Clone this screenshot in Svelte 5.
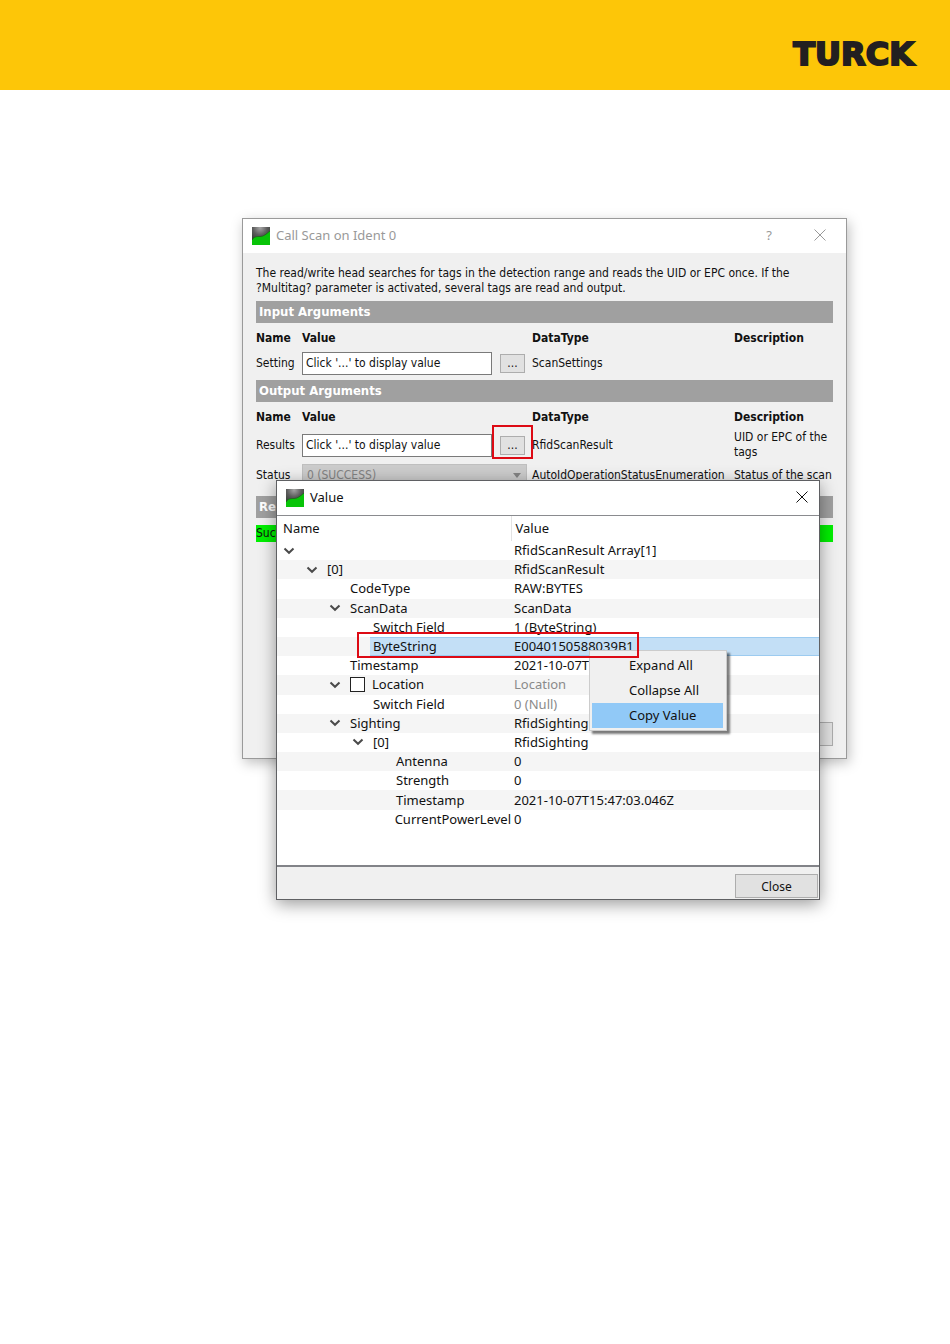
<script lang="ts">
    const treeRows = [
        { level: 0, name: '', value: 'RfidScanResult Array[1]', open: true },
        { level: 1, name: '[0]', value: 'RfidScanResult', open: true },
        { level: 2, name: 'CodeType', value: 'RAW:BYTES' },
        { level: 2, name: 'ScanData', value: 'ScanData', open: true },
        { level: 3, name: 'Switch Field', value: '1 (ByteString)' },
        { level: 3, name: 'ByteString', value: 'E0040150588039B1', selected: true },
        { level: 2, name: 'Timestamp', value: '2021-10-07T15:47:03.046Z' },
        { level: 2, name: 'Location', value: 'Location', open: true, checkbox: true, muted: true },
        { level: 3, name: 'Switch Field', value: '0 (Null)', muted: true },
        { level: 2, name: 'Sighting', value: 'RfidSighting Array[1]', open: true },
        { level: 3, name: '[0]', value: 'RfidSighting', open: true },
        { level: 4, name: 'Antenna', value: '0' },
        { level: 4, name: 'Strength', value: '0' },
        { level: 4, name: 'Timestamp', value: '2021-10-07T15:47:03.046Z' },
        { level: 4, name: 'CurrentPowerLevel', value: '0' }
    ];

    const menuItems = ['Expand All', 'Collapse All', 'Copy Value'];
</script>

{#snippet appIcon(id)}
    <svg class="app-icon" viewBox="0 0 18 18" aria-hidden="true">
        <defs>
            <radialGradient id={id} cx="0.45" cy="0.05" r="0.8">
                <stop offset="0" stop-color="#a5a5a5" />
                <stop offset="0.5" stop-color="#5c5c5c" />
                <stop offset="1" stop-color="#2f3a2f" />
            </radialGradient>
        </defs>
        <rect width="18" height="18" fill="url(#{id})" />
        <path d="M0 13 C2 9.500 5 9.500 8 9.500 C12 9.500 14 7 18 4 V18 H0 Z" fill="#08c408" />
        <path d="M0 13 C2 9.500 5 9.500 8 9.500 C12 9.500 14 7 18 4" fill="none" stroke="#1c5c1c" stroke-width="0.7" />
    </svg>
{/snippet}

{#snippet closeIcon()}
    <svg class="close-icon" viewBox="0 0 12 12" aria-hidden="true">
        <path d="M0.500 0.500 L11.500 11.500 M11.500 0.500 L0.500 11.500" />
    </svg>
{/snippet}

{#snippet columns()}
    <colgroup>
        <col class="col-name" />
        <col class="col-value" />
        <col class="col-more" />
        <col class="col-type" />
        <col />
    </colgroup>
    <thead>
        <tr>
            <th>Name</th>
            <th>Value</th>
            <th></th>
            <th>DataType</th>
            <th>Description</th>
        </tr>
    </thead>
{/snippet}

<header class="brand-bar">
    <div class="brand">TURCK</div>
</header>

<main>
    <div class="desktop">
        <section class="dialog">
            <div class="title-bar">
                {@render appIcon('icon-call')}
                <h1>Call Scan on Ident 0</h1>
                <button class="title-button help" aria-label="Help">?</button>
                <button class="title-button" aria-label="Close dialog">{@render closeIcon()}</button>
            </div>
            <div class="dialog-body">
                <p>
                    The read/write head searches for tags in the detection range and reads the UID or EPC once. If the
                    <span class="keep">?Multitag?</span> parameter is activated, several tags are read and output.
                </p>

                <h2>Input Arguments</h2>
                <table class="arguments">
                    {@render columns()}
                    <tbody>
                        <tr class="input-row">
                            <td><label for="setting">Setting</label></td>
                            <td><input id="setting" type="text" readonly value="Click '...' to display value" /></td>
                            <td><button class="more" aria-label="Show setting">...</button></td>
                            <td>ScanSettings</td>
                            <td></td>
                        </tr>
                    </tbody>
                </table>

                <h2>Output Arguments</h2>
                <table class="arguments">
                    {@render columns()}
                    <tbody>
                        <tr class="result-row">
                            <td><label for="results">Results</label></td>
                            <td><input id="results" type="text" readonly value="Click '...' to display value" /></td>
                            <td class="marked">
                                <button class="more" aria-label="Show results">...</button>
                                <span class="mark mark-button"></span>
                            </td>
                            <td>RfidScanResult</td>
                            <td>UID or EPC of the tags</td>
                        </tr>
                        <tr class="status-row">
                            <td><label for="status">Status</label></td>
                            <td colspan="2">
                                <div class="select-box">
                                    <select id="status" disabled>
                                        <option>0 (SUCCESS)</option>
                                    </select>
                                    <svg viewBox="0 0 8 5" aria-hidden="true"><path d="M0 0 H8 L4 5 Z" /></svg>
                                </div>
                            </td>
                            <td>AutoIdOperationStatusEnumeration</td>
                            <td>Status of the scan</td>
                        </tr>
                    </tbody>
                </table>

                <h2>Result</h2>
                <div class="success">Success</div>

                <div class="dialog-footer">
                    <button class="push">Close</button>
                </div>
            </div>
        </section>

        <section class="value-window">
            <div class="title-bar">
                {@render appIcon('icon-value')}
                <h1>Value</h1>
                <button class="title-button" aria-label="Close window">{@render closeIcon()}</button>
            </div>
            <div class="tree-area">
                <table class="tree">
                    <thead>
                        <tr>
                            <th>Name</th>
                            <th>Value</th>
                        </tr>
                    </thead>
                    <tbody>
                        {#each treeRows as row, i}
                            <tr class:selected={row.selected}>
                                <td>
                                    <div class="node" style="padding-left: {row.level * 23 + 6}px">
                                        <span class="toggle">
                                            {#if row.open}
                                                <svg viewBox="0 0 12 8" aria-hidden="true"><path d="M1.500 1.500 L6 5.800 L10.500 1.500" /></svg>
                                            {/if}
                                        </span>
                                        {#if row.checkbox}
                                            <input id="node-{i}" type="checkbox" />
                                            <label for="node-{i}">{row.name}</label>
                                        {:else}
                                            <span class="node-name">{row.name}</span>
                                        {/if}
                                    </div>
                                </td>
                                <td class:muted={row.muted}>{row.value}</td>
                            </tr>
                        {/each}
                    </tbody>
                </table>

                <div class="context-menu" role="menu">
                    {#each menuItems as item}
                        <button role="menuitem" class:active={item === 'Copy Value'}>{item}</button>
                    {/each}
                </div>
                <span class="mark mark-row"></span>
            </div>
            <div class="window-footer">
                <button class="push">Close</button>
            </div>
        </section>
    </div>
</main>

<style>
:global(body) {
    margin: 0;
    background: #fff;
}
* {
    box-sizing: border-box;
}
button, input, select {
    margin: 0;
    font: inherit;
    color: inherit;
}
h1, h2, p {
    margin: 0;
    font: inherit;
}
table {
    border-collapse: collapse;
    table-layout: fixed;
    width: 100%;
}
td, th {
    padding: 0;
    text-align: left;
}

.brand-bar {
    display: flex;
    justify-content: flex-end;
    align-items: center;
    height: 90px;
    padding: 18px 36px 0 0;
    background: #fdc608;
}
.brand {
    font: bold 32px/32px "DejaVu Sans", sans-serif;
    color: #231f20;
    -webkit-text-stroke: 2px #231f20;
}

main {
    min-height: calc(100vh - 90px);
    padding: 128px 103px 240px 242px;
}
.desktop {
    position: relative;
    color: #111;
    font: 13px/19px "Noto Sans", sans-serif;
}
.dialog {
    display: flex;
    flex-direction: column;
    min-height: 541px;
    border: 1px solid #9a9a9a;
    background: #f0f0f0;
    box-shadow: 2px 4px 12px rgba(0, 0, 0, 0.25);
}
.title-bar {
    display: flex;
    align-items: center;
    height: 34px;
    padding-left: 9px;
    background: #fff;
}
.title-bar h1 {
    flex: 1;
    padding: 0 0 2px 6px;
}
.app-icon {
    width: 18px;
    height: 18px;
}
.title-button {
    display: flex;
    align-items: center;
    justify-content: center;
    width: 34px;
    height: 34px;
    padding: 0 0 2px;
    border: 0;
    background: none;
}
.close-icon {
    width: 12px;
    height: 12px;
    fill: none;
    stroke: currentColor;
}
.dialog .title-bar {
    padding-right: 9px;
    color: #999;
}
.dialog .help {
    margin-right: 17px;
}

.dialog-body {
    flex: 1;
    display: flex;
    flex-direction: column;
    padding: 13px 13px 12px;
    font: 12px/15px "DejaVu Sans Condensed", "DejaVu Sans", sans-serif;
    font-stretch: condensed;
}
.keep {
    white-space: nowrap;
}
h2 {
    margin-top: 5px;
    padding: 0 3px;
    background: #a0a0a0;
    color: #fff;
    font-size: 13px;
    font-weight: bold;
    line-height: 22px;
}
.arguments th {
    height: 28px;
    padding-top: 2px;
}
.col-name {
    width: 46px;
}
.col-value {
    width: 198px;
}
.col-more {
    width: 32px;
}
.col-type {
    width: 202px;
}
.arguments input {
    display: block;
    width: 190px;
    height: 23px;
    padding: 0 3px;
    border: 1px solid #7a7a7a;
    outline: 0;
    background: #fff;
}
.input-row {
    height: 24px;
}
.result-row {
    height: 30px;
}
.status-row {
    height: 31px;
}
.more {
    display: block;
    width: 25px;
    height: 19px;
    padding: 0;
    border: 1px solid #adadad;
    background: #e1e1e1;
    line-height: 15px;
}
.marked {
    position: relative;
}
.mark {
    position: absolute;
    border: 2px solid #dd0a14;
    pointer-events: none;
}
.mark-button {
    top: -5px;
    left: -8px;
    width: 41px;
    height: 34px;
}
.select-box {
    position: relative;
    width: 225px;
}
.select-box select {
    display: block;
    appearance: none;
    width: 100%;
    height: 23px;
    padding: 0 4px;
    border: 1px solid #bfbfbf;
    border-radius: 0;
    background: #ccc;
    color: #838383;
    opacity: 1;
}
.select-box svg {
    position: absolute;
    top: 9px;
    right: 6px;
    width: 8px;
    height: 5px;
    fill: #838383;
}
.success {
    margin-top: 7px;
    background: #00f000;
    line-height: 17px;
}
.dialog-footer {
    display: flex;
    justify-content: flex-end;
    margin-top: auto;
}

.push {
    width: 83px;
    height: 24px;
    padding: 0;
    border: 1px solid #adadad;
    background: #e1e1e1;
    font-size: 12px;
}

.value-window {
    position: absolute;
    top: 262px;
    left: 34px;
    right: 27px;
    border: 1px solid #5f6063;
    background: #f0f0f0;
    box-shadow: 0 4px 16px rgba(0, 0, 0, 0.4);
}
.tree-area {
    position: relative;
    height: 352px;
    border-top: 1px solid #8a8b8f;
    border-bottom: 2px solid #828388;
    background: #fff;
}
.tree {
    height: 313px;
}
.tree th {
    height: 25px;
    padding-left: 6px;
    font-weight: normal;
}
.tree th:first-child {
    width: 234px;
}
.tree th + th {
    padding-left: 4px;
    border-left: 1px solid #e3e3e3;
}
.tree td {
    line-height: 19px;
    white-space: nowrap;
}
.tree td + td {
    padding-left: 3px;
}
.tree tbody tr:nth-child(even) {
    background: #f5f5f5;
}
.tree .muted {
    color: #8a8a8a;
}
.tree .selected td + td,
.selected .node-name {
    background: #c3dff6;
    box-shadow: inset 0 1px #9ccbf0, inset 0 -1px #9ccbf0;
}
.node {
    display: flex;
    align-items: center;
}
.toggle {
    display: flex;
    width: 18px;
}
.toggle svg {
    width: 12px;
    height: 8px;
    fill: none;
    stroke: #4a4a4a;
    stroke-width: 2;
}
.node-name {
    flex: 1;
    padding-left: 3px;
}
.node input {
    appearance: none;
    width: 15px;
    height: 15px;
    margin: 0 7px 0 3px;
    border: 1px solid #222;
    background: #fff;
}

.context-menu {
    position: absolute;
    top: 134px;
    left: 312px;
    width: 138px;
    padding: 2px;
    border: 1px solid #ccc;
    background: #f0f0f0;
    box-shadow: 3px 3px 2px rgba(0, 0, 0, 0.5);
}
.context-menu button {
    display: block;
    width: 131px;
    height: 25px;
    padding: 0 0 0 37px;
    border: 0;
    background: none;
    text-align: left;
}
.context-menu .active {
    background: #91c9f7;
}
.mark-row {
    top: 116px;
    left: 80px;
    width: 282px;
    height: 26px;
}
.window-footer {
    display: flex;
    justify-content: flex-end;
    padding: 7px 1px 1px;
}
</style>
